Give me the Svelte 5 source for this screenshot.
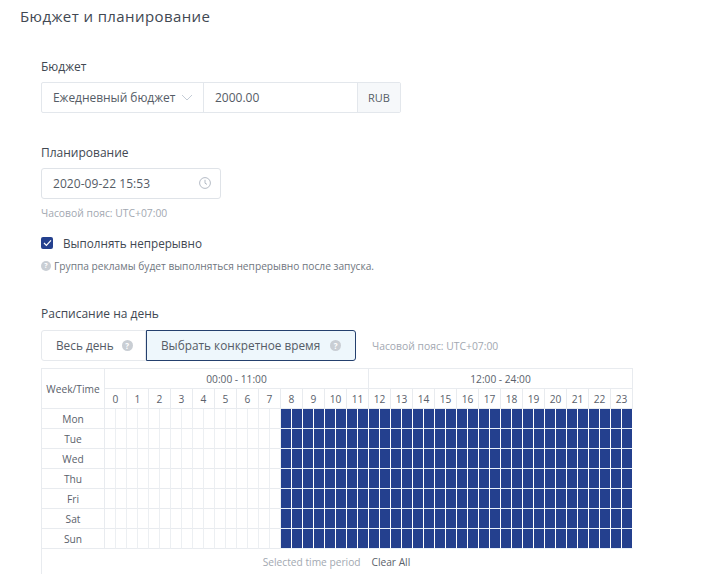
<script>
  const days = ['Mon', 'Tue', 'Wed', 'Thu', 'Fri', 'Sat', 'Sun'];
  const hours = Array.from({ length: 24 }, (_, i) => i);
  const slots = Array.from({ length: 48 }, (_, i) => i);
</script>

<main>
  <h1>Бюджет и планирование</h1>

  <section class="form">
    <div class="label budget-label">Бюджет</div>
    <div class="budget">
      <div class="select">
        <span>Ежедневный бюджет</span>
        <svg width="12" height="7" viewBox="0 0 12 7"><path d="M1 1l5 5 5-5" fill="none" stroke="#c4ccd6" /></svg>
      </div>
      <div class="amount">2000.00</div>
      <div class="currency">RUB</div>
    </div>

    <div class="label plan-label">Планирование</div>
    <div class="date">
      <span>2020-09-22 15:53</span>
      <svg width="12" height="12" viewBox="0 0 12 12">
        <circle cx="6" cy="6" r="5.4" fill="none" stroke="#b4bbc5" />
        <path d="M6 2.8v3.4l2 1.2" fill="none" stroke="#b4bbc5" />
      </svg>
    </div>
    <div class="hint tz">Часовой пояс: UTC+07:00</div>

    <div class="check">
      <span class="box">
        <svg width="9" height="8" viewBox="0 0 9 8"><path d="M1 4l2.4 2.4L8 1.4" fill="none" stroke="#fff" stroke-width="1.2" /></svg>
      </span>
      <span>Выполнять непрерывно</span>
    </div>
    <div class="hint note"><i class="help small">?</i>Группа рекламы будет выполняться непрерывно после запуска.</div>

    <div class="label day-label">Расписание на день</div>
    <div class="modes">
      <div class="mode">Весь день <i class="help">?</i></div>
      <div class="mode active">Выбрать конкретное время <i class="help">?</i></div>
      <div class="hint mode-tz">Часовой пояс: UTC+07:00</div>
    </div>

    <div class="schedule">
      <div class="corner">Week/Time</div>
      <div class="range first">00:00 - 11:00</div>
      <div class="range">12:00 - 24:00</div>
      {#each hours as h}
        <div class="hour">{h}</div>
      {/each}
      {#each days as day}
        <div class="day">{day}</div>
        {#each slots as s}
          <div class="slot" class:on={s >= 16}></div>
        {/each}
      {/each}
      <div class="foot"><span>Selected time period</span><b>Clear All</b></div>
    </div>
  </section>
</main>

<style>
  :global(body) {
    background: #fff;
  }

  main {
    font-family: 'Open Sans', sans-serif;
    width: 724px;
    height: 575px;
    overflow: hidden;
    color: #414852;
    font-size: 12px;
  }

  h1 {
    margin: 0;
    padding: 6px 0 0 20px;
    font-size: 15px;
    line-height: 20px;
    font-weight: 400;
    letter-spacing: 0.4px;
  }

  .form {
    padding: 0 0 0 41px;
  }

  .label {
    line-height: 18px;
    font-size: 12px;
  }

  .budget-label {
    margin-top: 32px;
  }

  .budget {
    display: flex;
    width: 360px;
    height: 31px;
    margin-top: 6px;
    border: 1px solid #e3e7ec;
    border-radius: 2px;
    box-sizing: border-box;
    line-height: 29px;
    font-size: 12px;
  }

  .select {
    width: 162px;
    padding-left: 11px;
    box-sizing: border-box;
    display: flex;
    align-items: center;
    gap: 6px;
    border-right: 1px solid #e3e7ec;
    color: #555c66;
    letter-spacing: -0.05px;
  }

  .amount {
    flex: 1;
    padding-left: 11px;
    color: #555c66;
  }

  .currency {
    width: 42px;
    text-align: center;
    background: #f6f8fa;
    border-left: 1px solid #e3e7ec;
    font-size: 11px;
    color: #555c66;
  }

  .plan-label {
    margin-top: 31px;
  }

  .date {
    width: 180px;
    height: 31px;
    margin-top: 6px;
    padding: 0 9px 0 11px;
    box-sizing: border-box;
    border: 1px solid #dfe3e8;
    border-radius: 3px;
    display: flex;
    justify-content: space-between;
    align-items: center;
    color: #555c66;
    letter-spacing: 0.05px;
  }

  .date svg {
    margin-top: -2px;
  }

  .hint {
    color: #a2a8b1;
    font-size: 10.35px;
    line-height: 14px;
  }

  .tz {
    margin-top: 7px;
  }

  .check {
    display: flex;
    align-items: center;
    gap: 10px;
    margin-top: 14px;
    line-height: 18px;
    font-size: 11.7px;
  }

  .box {
    width: 12px;
    height: 12px;
    background: #24408e;
    border-radius: 2px;
    display: flex;
    align-items: center;
    justify-content: center;
  }

  .note {
    margin-top: 7px;
    color: #6f7680;
    font-size: 10.2px;
    display: flex;
    align-items: center;
    gap: 3px;
  }

  .help {
    display: inline-block;
    flex: none;
    width: 11px;
    height: 11px;
    border-radius: 50%;
    background: #c9ced4;
    color: #fff;
    font-size: 8px;
    font-style: normal;
    font-weight: 700;
    line-height: 11px;
    text-align: center;
  }

  .help.small {
    width: 10px;
    height: 10px;
    line-height: 10px;
    font-size: 7px;
  }

  .day-label {
    margin-top: 32px;
  }

  .modes {
    display: flex;
    align-items: center;
    margin-top: 7px;
    height: 31px;
  }

  .mode {
    height: 31px;
    box-sizing: border-box;
    border: 1px solid #e6e9ed;
    line-height: 29px;
    padding: 0 14px;
    border-radius: 3px 0 0 3px;
    display: flex;
    align-items: center;
    gap: 8px;
    width: 105px;
    color: #555c66;
    white-space: nowrap;
    font-size: 11.8px;
  }

  .mode.active {
    width: 210px;
    border-color: #24406e;
    background: #eef7fc;
    border-radius: 0 3px 3px 0;
    padding: 0 14px;
    gap: 10px;
  }

  .mode-tz {
    margin-left: 16px;
  }

  .schedule {
    display: grid;
    grid-template-columns: 63px repeat(48, 11px);
    grid-template-rows: 20px 20px repeat(7, 20px) 25px;
    width: 592px;
    margin-top: 7px;
    box-sizing: border-box;
    font-size: 10.2px;
    text-align: center;
    color: #5a616b;
    border-top: 1px solid #e8ebef;
    border-left: 1px solid #e8ebef;
  }

  .corner {
    grid-column: 1;
    grid-row: 1 / span 2;
    display: flex;
    align-items: center;
    justify-content: center;
    border-right: 1px solid #e8ebef;
    border-bottom: 1px solid #e8ebef;
  }

  .range {
    grid-column: span 24;
    line-height: 20px;
    border-right: 1px solid #e8ebef;
    border-bottom: 1px solid #e8ebef;
  }

  .hour {
    grid-column: span 2;
    line-height: 20px;
    border-right: 1px solid #e8ebef;
    border-bottom: 1px solid #e8ebef;
  }

  .day {
    line-height: 20px;
    border-right: 1px solid #e8ebef;
    border-bottom: 1px solid #e8ebef;
  }

  .slot {
    border-right: 1px solid #eceff2;
    border-bottom: 1px solid #e8ebef;
  }

  .slot.on {
    background: #24408e;
    border-color: #fff;
    border-bottom-color: #e8f0f8;
  }

  .foot {
    grid-column: 1 / -1;
    display: flex;
    justify-content: center;
    gap: 11px;
    line-height: 26px;
    color: #a2a8b1;
    padding-right: 2px;
  }

  .foot b {
    font-weight: 400;
    color: #5a616b;
  }
</style>
